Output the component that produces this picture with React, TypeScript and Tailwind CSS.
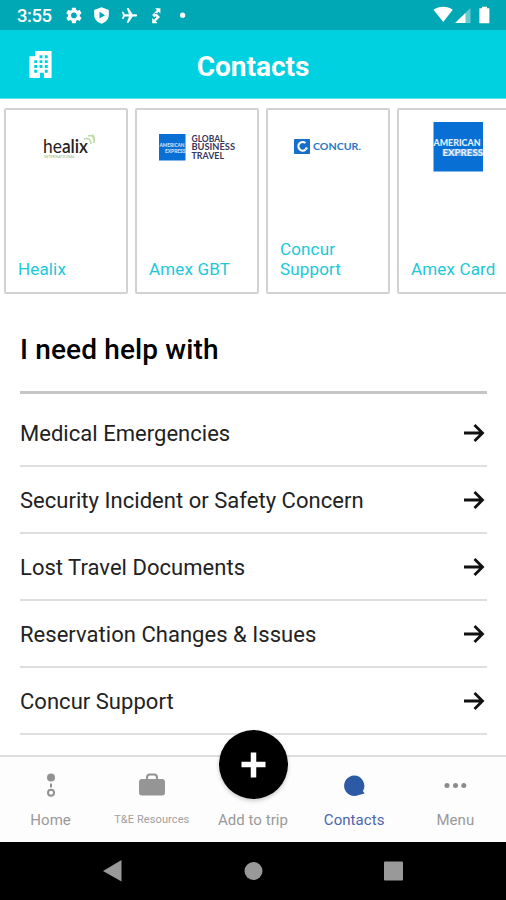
import type { ReactNode } from 'react';

const logoFont = 'Lato, "Noto Sans", sans-serif';

function StatusBar() {
  return (
    <div className="flex h-[30px] shrink-0 items-center bg-[#00a7b5] pl-[17px] text-white">
      <span className="w-[36px] pt-[2px] text-[18.5px] leading-[28px] font-medium tracking-[-0.5px] whitespace-nowrap">3:55</span>
      <svg className="h-[30px] w-[453px]" viewBox="53 0 453 30" fill="currentColor">
        <g transform="translate(64.2 5.7) scale(.81)">
          <path d="M19.14 12.94c.04-.3.06-.61.06-.94 0-.32-.02-.64-.07-.94l2.03-1.58c.18-.14.23-.41.12-.61l-1.92-3.32c-.12-.22-.37-.29-.59-.22l-2.39.96c-.5-.38-1.03-.7-1.62-.94l-.36-2.54c-.04-.24-.24-.41-.48-.41h-3.84c-.24 0-.43.17-.47.41l-.36 2.54c-.59.24-1.13.57-1.62.94l-2.39-.96c-.22-.08-.47 0-.59.22L2.74 8.87c-.12.21-.08.47.12.61l2.03 1.58c-.05.3-.09.63-.09.94s.02.64.07.94l-2.03 1.58c-.18.14-.23.41-.12.61l1.92 3.32c.12.22.37.29.59.22l2.39-.96c.5.38 1.03.7 1.62.94l.36 2.54c.05.24.24.41.48.41h3.84c.24 0 .44-.17.47-.41l.36-2.54c.59-.24 1.13-.56 1.62-.94l2.39.96c.22.08.47 0 .59-.22l1.92-3.32c.12-.22.07-.47-.12-.61l-2.01-1.58zM12 15.6c-2 0-3.6-1.6-3.6-3.6s1.6-3.6 3.6-3.6 3.6 1.6 3.6 3.6-1.6 3.6-3.6 3.6z" />
        </g>
        <path fillRule="evenodd" d="M101.500 7.200l7.300 2.800v5c0 4.200-3 7.200-7.300 8.700-4.300-1.500-7.300-4.500-7.300-8.700v-5zM99.500 11.800v6.800l5.500-3.400z" />
        <path d="M122 11.700h1.400l1.500 2.500h4.100L126.700 8h1.800l4.200 6.200h3.300c1.500 0 1.500 2.400 0 2.400h-3.300l-4.200 6.200h-1.800l2.300-6.200h-4.100l-1.500 2.500H122l.9-3.700z" />
        <path d="M155 8.200h5.400v5.200l-1.700-1.700-2.900 2.900-1.700-1.700 2.800-2.800zM152.200 23.200h5.400l-1.900-1.900 4.300-4.300-3.600-3.400-1.700 1.700 1.900 1.800-2.600 2.600-1.800-1.800zM154.100 12.900l-2 2 2.300 2.300 1.700-1.700-.6-.6 2-2z" />
        <circle cx="182.600" cy="15.200" r="2.600" />
        <path d="M433.500 9.800c5.500-4 14-4 19.300 0L443.200 22z" />
        <path d="M470.500 8v15h-15.400z" opacity=".4" />
        <path d="M465.500 13v10h-10.400z" />
        <path d="M482 6.700h5v1.600h2.400v14.900h-10V8.300h2.600z" />
      </svg>
    </div>
  );
}

function Header() {
  return (
    <header className="grid h-[69px] shrink-0 grid-cols-[80px_1fr_80px] items-center border-b border-[#5ce5ec] bg-[#00d1e1] text-white">
      <svg className="mt-[1px] ml-[29px] h-[27px] w-[23px]" viewBox="0 0 23 28" fill="currentColor">
        <path fillRule="evenodd" d="M6 0h17v28h-8v-5.500h-4V28H0V5.500h6zM10.500 4.500v3h3v-3zM16 4.500v3h3v-3zM5 9.500v3h3v-3zM10.500 9.500v3h3v-3zM16 9.500v3h3v-3zM5 14.500v3h3v-3zM10.500 14.500v3h3v-3zM16 14.500v3h3v-3zM5 19.500v3h3v-3zM16 19.500v3h3v-3z" />
      </svg>
      <h1 className="pt-[5px] text-center text-[28px] leading-[34px] font-bold">Contacts</h1>
    </header>
  );
}

function Card({ label, children }: { label: ReactNode; children: ReactNode }) {
  return (
    <div className="flex h-[186px] w-[124px] shrink-0 flex-col justify-between rounded-[2px] border-2 border-[#d2d2d2]">
      <svg className="h-[80px] w-[120px]" viewBox="0 0 120 80">{children}</svg>
      <p className="pb-[13px] pl-[12px] text-[17px] leading-[20px] tracking-[0.15px] whitespace-nowrap text-[#20c8d7]">{label}</p>
    </div>
  );
}

function Cards() {
  return (
    <section className="flex shrink-0 gap-[7px] overflow-hidden pt-[9px] pl-[4px]">
      <Card label="Healix">
        <text x="37" y="43" fontFamily={logoFont} fontSize="20" fill="#222" textLength="45" lengthAdjust="spacingAndGlyphs">he<tspan fontWeight="600">alix</tspan></text>
        <text x="38" y="47.500" fontFamily={logoFont} fontSize="4" fill="#9bb779" textLength="31">INTERNATIONAL</text>
        <path d="M78 29q7-2 7 5M82 26q5-2 6 4M86 25q3 1 2 8" fill="none" stroke="#a4cf7f" strokeWidth="1.500" opacity=".75" />
      </Card>
      <Card label="Amex GBT">
        <rect x="22" y="24" width="26.500" height="26.500" fill="#0870d4" />
        <text x="22.500" y="37" fontFamily={logoFont} fontWeight="900" fontSize="5.500" fill="#c9e0fa" textLength="25" lengthAdjust="spacingAndGlyphs">AMERICAN</text>
        <text x="28" y="42.500" fontFamily={logoFont} fontWeight="900" fontSize="5.500" fill="#c9e0fa" textLength="20.500" lengthAdjust="spacingAndGlyphs">EXPRESS</text>
        <g fontFamily={logoFont} fontWeight="700" fontSize="8.500" fill="#37375c">
          <text x="54.500" y="32" textLength="33" lengthAdjust="spacingAndGlyphs">GLOBAL</text>
          <text x="54.500" y="40.200" textLength="43.500" lengthAdjust="spacingAndGlyphs">BUSINESS</text>
          <text x="54.500" y="48.600" textLength="32.500" lengthAdjust="spacingAndGlyphs">TRAVEL</text>
        </g>
      </Card>
      <Card label={<>Concur<br />Support</>}>
        <rect x="26" y="29" width="16" height="15" rx=".8" fill="#166fc9" />
        <path d="M37.500 33a4.300 4.300 0 1 0 0 6.600" fill="none" stroke="white" strokeWidth="2.200" />
        <circle cx="38.300" cy="38.500" r="1.300" fill="white" />
        <text x="45" y="40.300" fontFamily={logoFont} fontWeight="700" fontSize="9.800" fill="#2876c4" textLength="48" lengthAdjust="spacingAndGlyphs">CONCUR.</text>
      </Card>
      <Card label="Amex Card">
        <rect x="34.500" y="12" width="49.500" height="49.500" fill="#0870d4" />
        <rect x="43.500" y="39" width="40.500" height="7" fill="#b8d8fa" opacity=".35" />
        <text x="34.500" y="35.500" fontFamily={logoFont} fontWeight="900" fontSize="9" fill="#e5f1ff" textLength="47" lengthAdjust="spacingAndGlyphs">AMERICAN</text>
        <text x="43.500" y="46" fontFamily={logoFont} fontWeight="900" fontSize="9" fill="#e5f1ff" textLength="40.500" lengthAdjust="spacingAndGlyphs">EXPRESS</text>
      </Card>
    </section>
  );
}

const topics = ['Medical Emergencies', 'Security Incident or Safety Concern', 'Lost Travel Documents', 'Reservation Changes & Issues', 'Concur Support'];

function Topics() {
  return (
    <main className="min-h-0 flex-1 pr-[19px] pl-[20px]">
      <h2 className="h-[100px] border-b-[3px] border-[#c6c6c6] pt-[40px] text-[28px] leading-[32px] font-medium tracking-[0.14px] text-black">I need help with</h2>
      <ul>
        {topics.map((topic) => (
          <li key={topic} className="flex h-[67px] items-center justify-between border-b-2 border-[#dedede] pt-[9px] pb-[7px] text-[22px] tracking-[0.03px] text-[#222] first:h-[73px] first:pt-[15px]">
            <span className="mt-[-1px] whitespace-nowrap">{topic}</span>
            <svg className="mt-[-1px] mr-[2px] h-[20px] w-[21px]" viewBox="0 0 21 20" fill="none" stroke="#111" strokeWidth="2.800">
              <path d="M0 10h18.500M10.500 2l8 8-8 8" />
            </svg>
          </li>
        ))}
      </ul>
    </main>
  );
}

function NavItem({ label, className, children }: { label: string; className: string; children: ReactNode }) {
  return (
    <div className="flex w-[101.200px] flex-col items-center pt-[13px]">
      <svg className="h-[32px] w-[32px]" viewBox="0 0 32 32">{children}</svg>
      <span className={`mt-[8px] leading-[20px] whitespace-nowrap ${className}`}>{label}</span>
    </div>
  );
}

function BottomNav() {
  return (
    <nav className="relative flex h-[87px] shrink-0 border-t-2 border-[#dedede] bg-[#fdfdfd]">
      <NavItem label="Home" className="text-[15px] tracking-[0.05px] text-[#999]">
        <circle cx="16" cy="7.500" r="4" fill="#929292" />
        <path d="M16 13.500v4" stroke="#929292" strokeWidth="2" />
        <circle cx="16" cy="22.800" r="3" fill="none" stroke="#929292" strokeWidth="2" />
      </NavItem>
      <NavItem label="T&E Resources" className="text-[11px] tracking-[0.1px] text-[#a0a0a0]">
        <path d="M11 10V7.500q0-3 3-3h4q3 0 3 3V10" fill="none" stroke="#929292" strokeWidth="2" />
        <rect x="3" y="9" width="26" height="16.500" rx="3" fill="#959595" />
      </NavItem>
      <NavItem label="Add to trip" className="text-[15px] tracking-[0.05px] text-[#999]"><g /></NavItem>
      <NavItem label="Contacts" className="text-[15px] tracking-[0.05px] text-[#4c65ad]">
        <path d="M16 5.500a10.300 10.300 0 1 0 4.800 19.600l5.800-1.600-1.700-2.500A10.300 10.300 0 0 0 16 5.500z" fill="#2c5aa5" />
      </NavItem>
      <NavItem label="Menu" className="text-[15px] tracking-[0.05px] text-[#999]">
        <g fill="#8b8b8b"><circle cx="8" cy="15.500" r="2.500" /><circle cx="16.500" cy="15.500" r="2.500" /><circle cx="24.800" cy="15.500" r="2.500" /></g>
      </NavItem>
      <div className="absolute top-[-27px] left-[219px] h-[69px] w-[69px] rounded-full bg-black shadow-[0_2px_4px_#0003]">
        <svg className="h-full w-full" viewBox="0 0 69 69" stroke="white" strokeWidth="5.500"><path d="M22.500 34.500h24M34.500 22.500v25" /></svg>
      </div>
    </nav>
  );
}

export default function App() {
  return (
    <div className="flex h-[900px] w-[506px] flex-col overflow-hidden bg-white font-['Roboto',sans-serif]">
      <StatusBar />
      <Header />
      <Cards />
      <Topics />
      <BottomNav />
      <footer className="h-[58px] shrink-0 bg-black">
        <svg className="h-[58px] w-[506px]" viewBox="0 842 506 58" fill="#999">
          <path d="M103 871l18.500-11v21.500z" />
          <circle cx="253.500" cy="871" r="9" />
          <rect x="384" y="861.500" width="19" height="19" rx="1" />
        </svg>
      </footer>
    </div>
  );
}
